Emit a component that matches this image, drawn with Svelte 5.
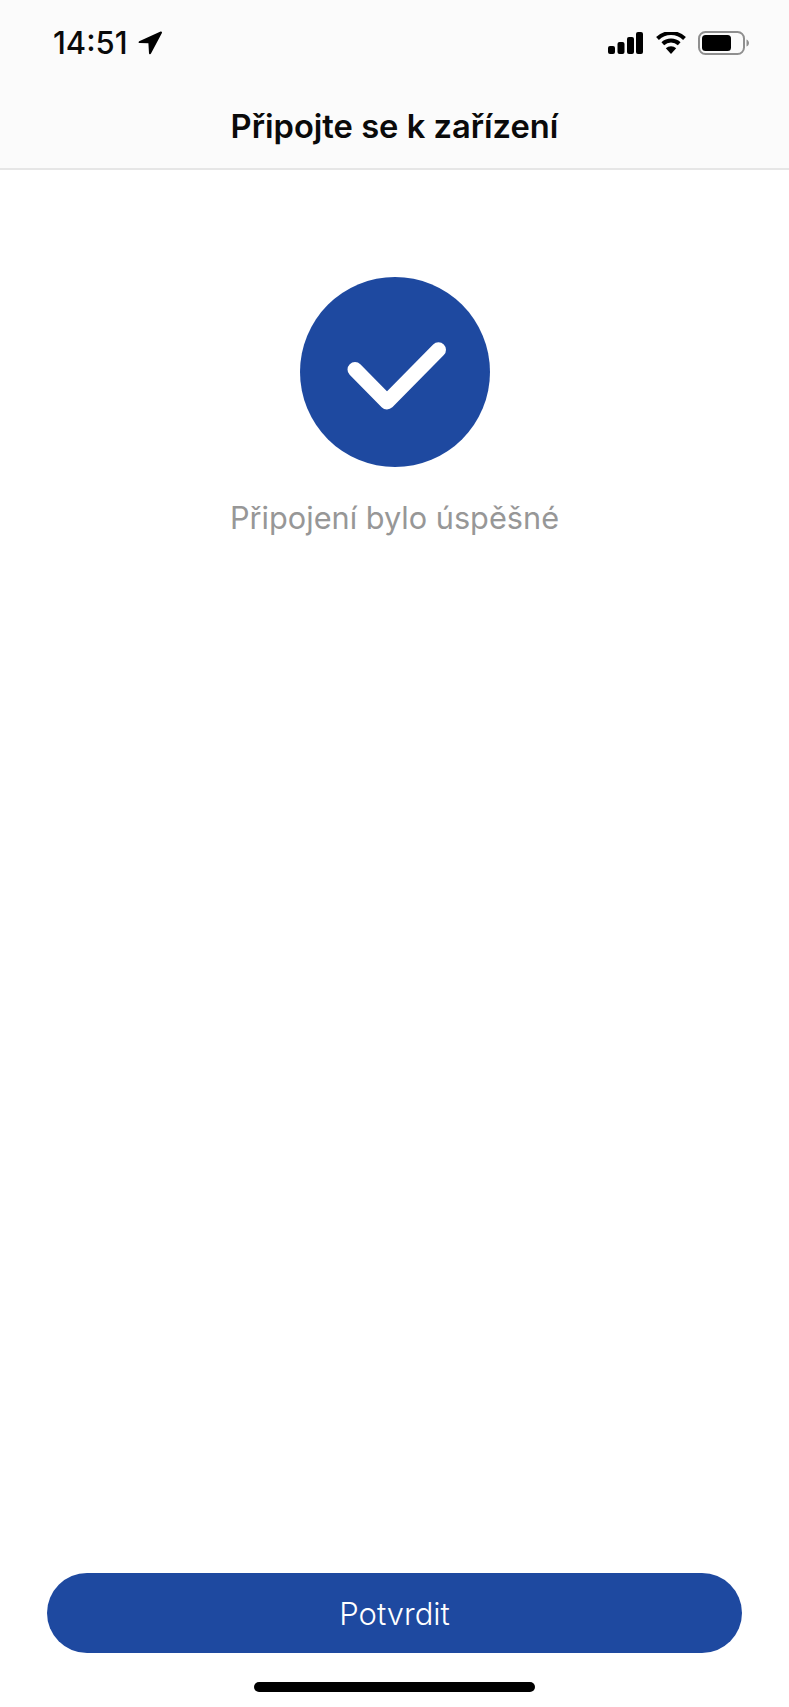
<script>
	const title = 'Připojte se k zařízení';
	const message = 'Připojení bylo úspěšné';
</script>

<div class="screen">
	<header>
		<div class="status">
			<div class="time">
				<span>14:51</span>
				<svg class="arrow" width="24" height="24" viewBox="0 0 24 24">
					<path
						d="M22.600 .6 1.200 10.200c-1 .5-.7 1.900.4 1.900l8.800.2.6 9.900c.1 1.100 1.500 1.400 2 .4L23.900 2c.4-.9-.4-1.800-1.300-1.400Z"
					/>
				</svg>
			</div>
			<div class="icons">
				<svg width="35" height="22" viewBox="0 0 35 22">
					<rect x="0" y="14" width="7" height="8" rx="2" />
					<rect x="9.500" y="10" width="7" height="12" rx="2" />
					<rect x="19" y="5" width="7" height="17" rx="2" />
					<rect x="28" y="0" width="7" height="22" rx="2" />
				</svg>
				<svg width="30" height="22" viewBox="0 0 30 22">
					<path d="M1.500 6.500a19.500 19.500 0 0 1 27 0" class="wave" />
					<path d="M6.800 11.800a12 12 0 0 1 16.400 0" class="wave" />
					<path d="M15 22 9.800 16.300a7.500 7.500 0 0 1 10.400 0Z" />
				</svg>
				<svg width="51" height="24" viewBox="0 0 51 24">
					<rect x="1" y="1" width="45" height="22" rx="6.500" class="shell" />
					<rect x="4" y="4" width="29" height="16" rx="3.500" />
					<path d="M48.500 8.500c1.500.5 2.500 2 2.500 3.500s-1 3-2.500 3.500Z" class="nub" />
				</svg>
			</div>
		</div>
		<h1>{title}</h1>
	</header>

	<main>
		<div class="badge">
			<svg width="190" height="190" viewBox="0 0 190 190">
				<path d="M55 92.500 87 125 138.500 72.800" class="tick" />
			</svg>
		</div>
		<p>{message}</p>
	</main>

	<footer>
		<button type="button">Potvrdit</button>
		<div class="home"></div>
	</footer>
</div>

<style>
	:global(body) {
		margin: 0;
		background: #fff;
	}

	.screen {
		display: flex;
		flex-direction: column;
		height: 1707px;
		font-family: Inter, 'Noto Sans', sans-serif;
		color: #0a0a0a;
	}

	header {
		display: flex;
		flex-direction: column;
		height: 168px;
		background: #fbfbfb;
		border-bottom: 2px solid #e6e6e6;
	}

	.status {
		display: flex;
		justify-content: space-between;
		align-items: center;
		padding: 26px 40px 0 53px;
	}

	.time {
		display: flex;
		align-items: center;
		gap: 10px;
		font-size: 31px;
		font-weight: 500;
		line-height: 34px;
	}

	.icons {
		display: flex;
		align-items: center;
		gap: 12.500px;
	}

	.wave {
		fill: none;
		stroke: #000;
		stroke-width: 4;
	}

	.shell {
		fill: none;
		stroke: #8f8f8f;
		stroke-width: 2;
	}

	.nub {
		fill: #8f8f8f;
	}

	h1 {
		margin: 46px 0 0;
		font-size: 32.700px;
		font-weight: 600;
		line-height: 40px;
		text-align: center;
	}

	main {
		flex: 1;
		display: flex;
		flex-direction: column;
		align-items: center;
		padding-top: 107px;
	}

	.badge {
		width: 190px;
		height: 190px;
		border-radius: 50%;
		background: #1e49a0;
	}

	.tick {
		fill: none;
		stroke: #fff;
		stroke-width: 15;
		stroke-linecap: round;
		stroke-linejoin: round;
	}

	p {
		margin: 31px 0 0;
		font-size: 30.700px;
		line-height: 40px;
		color: #979797;
	}

	footer {
		display: flex;
		flex-direction: column;
		align-items: center;
		padding: 0 47px 15px;
	}

	button {
		width: 100%;
		height: 80px;
		border: 0;
		border-radius: 40px;
		background: #1e49a0;
		color: #fff;
		font-family: inherit;
		font-size: 31px;
		font-weight: 300;
	}

	.home {
		width: 281px;
		height: 10px;
		margin-top: 29px;
		border-radius: 5px;
		background: #000;
	}
</style>
